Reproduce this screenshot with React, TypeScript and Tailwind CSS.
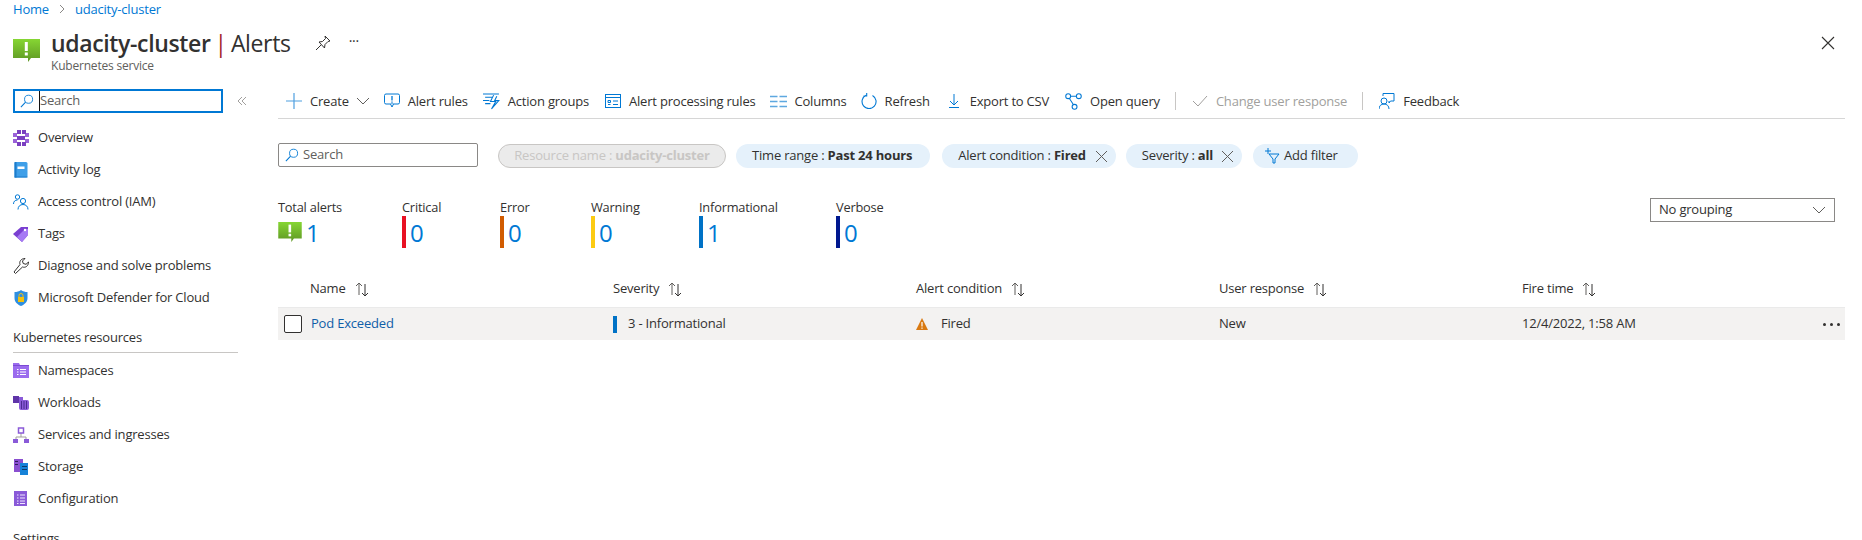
import React from "react";

const F = "[font-family:'Open_Sans',sans-serif]";
const B = "#0078d4";

function Svg({ s = 16, v = 16, c = "", children }: { s?: number; v?: number; c?: string; children: React.ReactNode }) {
  return (
    <svg width={s} height={s} viewBox={`0 0 ${v} ${v}`} fill="none" className={`shrink-0 ${c}`}>
      {children}
    </svg>
  );
}

function AlertLogo({ w = 27, h = 23 }: { w?: number; h?: number }) {
  return (
    <svg width={w} height={h} viewBox="0 0 27 23" className="shrink-0">
      <defs>
        <linearGradient id="lg" x1="0" y1="0" x2="0" y2="1">
          <stop offset="0" stopColor="#86d633" />
          <stop offset="1" stopColor="#5e9624" />
        </linearGradient>
      </defs>
      <path d="M0 0H27V19H18L15 23V19H0Z" fill="url(#lg)" />
      <rect x="11.8" y="3" width="3" height="9" fill="#fff" />
      <rect x="11.8" y="13.5" width="3" height="3" fill="#fff" />
    </svg>
  );
}

const Glass = ({ c = "" }: { c?: string }) => (
  <Svg s={14} c={c}>
    <circle cx="9.8" cy="6" r="4.6" stroke={B} strokeWidth="1" />
    <path d="M6.4 9.4L1 15" stroke={B} strokeWidth="1.2" />
  </Svg>
);

const Sort = () => (
  <Svg s={17} v={17}>
    <path d="M5 14V2M2 5l3-3 3 3" stroke="#605e5c" strokeWidth="1" />
    <path d="M11 3v12M8 12l3 3 3-3" stroke="#323130" strokeWidth="1" />
  </Svg>
);

const X = () => (
  <Svg s={13} v={13}>
    <path d="M1 1l11 11M12 1L1 12" stroke="#605e5c" strokeWidth="1" />
  </Svg>
);

const navIcons: Record<string, React.ReactNode> = {
  Overview: (
    <Svg s={16}>
      <g fill="#9a62d8">
        <rect x="0" y="3" width="4" height="4" />
        <rect x="0" y="9" width="4" height="4" />
        <rect x="12" y="3" width="4" height="4" />
        <rect x="12" y="9" width="4" height="4" />
      </g>
      <g fill="#7a3fc0">
        <rect x="4" y="0" width="4" height="4" />
        <rect x="9" y="0" width="4" height="4" />
        <rect x="4" y="6" width="8" height="4" />
        <rect x="4" y="12" width="4" height="4" />
        <rect x="9" y="12" width="4" height="4" />
      </g>
    </Svg>
  ),
  "Activity log": (
    <Svg s={16}>
      <rect x="1.5" y="0" width="13" height="15.500" rx="1.500" fill="#3f9fe8" />
      <rect x="1.5" y="0" width="2" height="15.500" fill="#1c7ccb" />
      <rect x="4.500" y="4.500" width="7" height="2.500" fill="#fff" />
      <rect x="1.500" y="14.500" width="13" height="1" fill="#1c7ccb" />
    </Svg>
  ),
  "Access control (IAM)": (
    <Svg s={16}>
      <circle cx="4.500" cy="3" r="2.200" stroke={B} />
      <path d="M.5 10c0-2.500 1.500-4 4-4" stroke={B} />
      <circle cx="10" cy="7" r="2.600" stroke={B} />
      <path d="M5 15.500c0-3 2-5 5-5s5 2 5 5" stroke={B} />
    </Svg>
  ),
  Tags: (
    <Svg s={16}>
      <path d="M0 8L8 1h7v8l-6 7z" fill="#7a3fd1" />
      <path d="M4 11l8-8h3v6l-6 7z" fill="#a67af4" />
      <circle cx="12" cy="4" r="1.200" fill="#fff" />
    </Svg>
  ),
  "Diagnose and solve problems": (
    <Svg s={16}>
      <path d="M1 14l1.500 1.500L9.500 9c3 1 6-1 6-5L13 6.300l-2.800-.8L9.500 3 12 .5C8 .5 6 3.500 7 6.500z" stroke="#323130" strokeWidth="1" fill="#fff" />
    </Svg>
  ),
  "Microsoft Defender for Cloud": (
    <Svg s={16}>
      <path d="M8 0c2 1.500 4 2 6.500 2v6c0 4-3 6.500-6.500 8C4.500 14.500 1.500 12 1.500 8V2C4 2 6 1.500 8 0z" fill="#2f8fe0" />
      <rect x="5" y="7" width="6" height="5" fill="#f4c20d" />
      <path d="M6 7V5.500a2 2 0 014 0V7" stroke="#f4c20d" />
    </Svg>
  ),
  Namespaces: (
    <Svg s={16}>
      <path d="M0 0h6l1 2h9v13H0z" fill="#9b6cee" />
      <rect x="0" y="2" width="16" height="1" fill="#7c4ad4" />
      <path d="M4 6.500h1.500M7 6.500h6M4 9h1.500M7 9h6M4 11.500h1.500M7 11.500h6" stroke="#fff" />
    </Svg>
  ),
  Workloads: (
    <Svg s={16}>
      <rect x="0" y="1" width="6" height="7" fill="#5f35a8" />
      <rect x="6" y="2" width="4" height="6" fill="#8a5ad8" />
      <rect x="6" y="5" width="10" height="10" rx="2" fill="#8a5ad8" />
      <path d="M8.500 6v8M11 6v8M13.500 6v8" stroke="#4b2a92" />
    </Svg>
  ),
  "Services and ingresses": (
    <Svg s={16}>
      <path d="M8 6v4M3 12v-2h10v2" stroke="#a19f9d" />
      <rect x="5.500" y="1" width="5" height="5" fill="#fff" stroke="#8a5ad8" strokeWidth="1.500" />
      <rect x="0" y="12" width="5" height="4" fill="#8a5ad8" />
      <rect x="11" y="12" width="5" height="4" fill="#8a5ad8" />
    </Svg>
  ),
  Storage: (
    <Svg s={16}>
      <rect x="1" y="0" width="9" height="13" fill="#8a4fd0" />
      <rect x="2" y="2" width="3" height="1" fill="#2d1a5c" />
      <rect x="2" y="5" width="3" height="1" fill="#2d1a5c" />
      <rect x="7" y="4" width="8" height="12" fill="#1682d8" />
      <rect x="9" y="7" width="5" height="1" fill="#0b3a68" />
      <rect x="9" y="10" width="5" height="1" fill="#0b3a68" />
    </Svg>
  ),
  Configuration: (
    <Svg s={16}>
      <rect x="1" y="0" width="13" height="15" fill="#8a5ad8" />
      <path d="M4 4h1.500M7 4h5M4 7h1.500M7 7h5M4 10h1.500M7 10h5M4 12.500h1.500M7 12.500h5" stroke="#efe6ff" />
    </Svg>
  ),
};

function NavRow({ label }: { label: string }) {
  return (
    <div className="flex h-8 items-center pl-[13px] text-[13px] text-[#323130]">
      <span className="flex w-[25px] shrink-0">{navIcons[label]}</span>
      <span>{label}</span>
    </div>
  );
}

function Tool({ icon, label, ml, dim, after, gap = "ml-[8px]" }: { icon: React.ReactNode; label: string; ml: string; dim?: boolean; after?: React.ReactNode; gap?: string }) {
  return (
    <div className={`flex items-center ${ml} ${dim ? "text-[#a19f9d]" : "text-[#323130]"}`}>
      {icon}
      <span className={gap}>{label}</span>
      {after}
    </div>
  );
}

const Sep = ({ ml }: { ml: string }) => <div className={`h-[18px] w-px bg-[#c8c6c4] ${ml}`} />;

function Stat({ label, value, color, w }: { label: string; value: string; color: string; w: string }) {
  return (
    <div className={`${w} shrink-0`}>
      <div className="text-[12.8px] leading-[17px] text-[#323130]">{label}</div>
      <div className="flex h-[32px] items-center">
        <span className={`h-[32px] w-[4px] ${color}`} />
        <span className="ml-[4px] mt-[1px] text-[24px] leading-none text-[#0078d4]">{value}</span>
      </div>
    </div>
  );
}

function Pill({ label, bold, x, c, gap = "gap-[9px]", pr = "pr-[18px]" }: { label: string; bold: string; x?: boolean; c: string; gap?: string; pr?: string }) {
  return (
    <div className={`flex h-[24px] items-center rounded-full bg-[#e5f1fb] pl-[16px] text-[13px] text-[#323130] ${gap} ${x ? "pr-[8px]" : pr} ${c}`}>
      <span>
        {label} : <b className="font-bold">{bold}</b>
      </span>
      {x && <X />}
    </div>
  );
}

function Head({ children }: { children: string }) {
  return (
    <div className="flex items-center gap-[8px] text-[13px] font-medium text-[#323130]">
      <span>{children}</span>
      <Sort />
    </div>
  );
}

export default function App() {
  return (
    <div className={`h-[540px] w-[1862px] overflow-hidden bg-white ${F} tracking-[-0.2px]`}>
      <div className="flex h-[18px] items-center pl-[13px] text-[13px] leading-[16px] text-[#0078d4]">
        <span>Home</span>
        <Svg s={10} v={10} c="mx-[8px]">
          <path d="M3 1l4 4-4 4" stroke="#8a8886" />
        </Svg>
        <span>udacity-cluster</span>
      </div>

      <div className="flex h-[71px] items-start pl-[13px] pt-[9px]">
        <div className="mt-[12px] w-[38px] shrink-0">
          <AlertLogo />
        </div>
        <div>
          <div className="flex items-center text-[23px] leading-[32px] tracking-[-0.35px] text-[#323130]">
            <span className="font-semibold">udacity-cluster</span>
            <span className="mx-[4px] text-[#a4262c]">|</span>
            <span>Alerts</span>
          </div>
          <div className="-mt-[1px] text-[12px] leading-[16px] text-[#605e5c]">Kubernetes service</div>
        </div>
        <Svg s={16} c="ml-[24px] mt-[8px]">
          <path d="M10 1l5 5-2 .5-3 3-.5 3.500L4 7l3.500-.5 3-3zM6 10l-5 5" stroke="#323130" />
        </Svg>
        <span className="ml-[18px] mt-[6px] text-[14px] leading-[16px] text-[#323130]">···</span>
        <Svg s={14} v={14} c="ml-auto mr-[27px] mt-[9px]">
          <path d="M1 1l12 12M13 1L1 13" stroke="#323130" strokeWidth="1.100" />
        </Svg>
      </div>

      <div className="flex">
        <aside className="w-[278px] shrink-0">
          <div className="flex items-center">
            <div className="ml-[13px] flex h-[24px] w-[210px] items-center border-2 border-[#0078d4] pl-[5px] text-[13px] text-[#605e5c]">
              <Glass />
              <span className="ml-[5px] border-l border-[#111]">Search</span>
            </div>
            <Svg s={12} v={12} c="ml-[13px]">
              <path d="M6 2L2 6l4 4M10 2L6 6l4 4" stroke="#a19f9d" />
            </Svg>
          </div>
          <div className="mt-[9px]">
            {["Overview", "Activity log", "Access control (IAM)", "Tags", "Diagnose and solve problems", "Microsoft Defender for Cloud"].map((l) => (
              <NavRow key={l} label={l} />
            ))}
          </div>
          <div className="ml-[13px] mr-[40px] mt-[14px] border-b border-[#c8c6c4] pb-[6px] text-[13px] font-medium leading-[18px] text-[#323130]">
            Kubernetes resources
          </div>
          <div className="mt-[2px]">
            {["Namespaces", "Workloads", "Services and ingresses", "Storage", "Configuration"].map((l) => (
              <NavRow key={l} label={l} />
            ))}
          </div>
          <div className="mt-[14px] pl-[13px] text-[13px] font-medium leading-[18px] text-[#323130]">Settings</div>
        </aside>

        <main className="min-w-0 flex-1 pr-[17px]">
          <div className="flex h-[30px] items-start border-b border-[#d6d6d6] pl-[8px] text-[13px] leading-[24px]">
            <Tool
              ml=""
              label="Create"
              icon={
                <Svg s={16}>
                  <path d="M8 0v16M0 8h16" stroke="#4f9fe0" strokeWidth="1.200" />
                </Svg>
              }
              after={
                <Svg s={14} v={14} c="ml-[7px]">
                  <path d="M1 4l6 6 6-6" stroke="#605e5c" />
                </Svg>
              }
            />
            <Tool
              ml="ml-[14px]"
              label="Alert rules"
              icon={
                <Svg s={16}>
                  <rect x=".5" y="1" width="15" height="10" rx="1.500" fill="#fff" stroke={B} />
                  <path d="M6.500 11l1.500 3 1.500-3" fill="#fff" stroke={B} />
                  <path d="M8 3v4.500M8 8.500v1.200" stroke={B} strokeWidth="1.300" />
                </Svg>
              }
            />
            <Tool
              ml="ml-[15px]"
              label="Action groups"
              icon={
                <Svg s={17} v={16}>
                  <path d="M0 1h15M2 4h7M0 7h6M2 10h5M10 2l-3 6h5l-4 7 7-8h-4l2-4" stroke={B} />
                </Svg>
              }
            />
            <Tool
              ml="ml-[16px]"
              label="Alert processing rules"
              icon={
                <Svg s={16}>
                  <rect x=".5" y="1.500" width="15" height="13" stroke={B} />
                  <path d="M.5 4.500h15M3 7.500h2.500v2H3zM3 11.500h2.500M8 8h5M8 11.500h5" stroke={B} />
                </Svg>
              }
            />
            <Tool
              ml="ml-[14px]"
              label="Columns"
              icon={
                <Svg s={17} v={17}>
                  <path d="M0 3.500h7.500M9.500 3.500H17M0 8.500h7.500M9.500 8.500H17M0 13.500h7.500M9.500 13.500H17" stroke="#5ea8e0" strokeWidth="1.600" />
                </Svg>
              }
            />
            <Tool
              ml="ml-[14px]"
              label="Refresh"
              icon={
                <Svg s={16}>
                  <path d="M5 2.300a7 7 0 106.500.2M5.700 0v3H2.500" stroke={B} strokeWidth="1.100" />
                </Svg>
              }
            />
            <Tool
              ml="ml-[17px]"
              gap="ml-[9px]"
              label="Export to CSV"
              icon={
                <Svg s={14} v={14}>
                  <path d="M7 0v11M3 7l4 4 4-4M2 13.500h10" stroke={B} />
                </Svg>
              }
            />
            <Tool
              ml="ml-[16px]"
              label="Open query"
              icon={
                <Svg s={17} v={16}>
                  <circle cx="3" cy="3" r="2.300" stroke={B} />
                  <circle cx="13" cy="3" r="2.300" stroke={B} />
                  <circle cx="9" cy="13" r="2.300" stroke={B} />
                  <path d="M5.300 3h5.400M4 5l4 6" stroke={B} />
                </Svg>
              }
            />
            <Sep ml="ml-[15px] mt-[3px]" />
            <Tool
              dim
              ml="ml-[16px]"
              label="Change user response"
              icon={
                <Svg s={16}>
                  <path d="M1 8l5 5 9-10" stroke="#a19f9d" />
                </Svg>
              }
            />
            <Sep ml="ml-[15px] mt-[3px]" />
            <Tool
              ml="ml-[16px]"
              label="Feedback"
              icon={
                <Svg s={16}>
                  <circle cx="5" cy="8" r="3" stroke={B} />
                  <path d="M0 16c0-3 2-5 5-5s5 2 5 5M4 3V.5h11V8h-3.500L10 10V8" stroke={B} />
                </Svg>
              }
            />
          </div>

          <div className="mt-[24px] flex items-start">
            <div className="flex h-[24px] w-[200px] items-center rounded-[2px] border border-[#8a8886] pl-[6px] text-[13px] text-[#605e5c]">
              <Glass />
              <span className="ml-[4px]">Search</span>
            </div>
            <div className="ml-[20px] mt-[1px] flex h-[24px] w-[228px] items-center justify-center rounded-full border border-[#c8c6c4] bg-[#ebebeb] text-[13px] text-[#c8c6c4]">
              <span>
                Resource name : <b className="font-bold">udacity-cluster</b>
              </span>
            </div>
            <div className="ml-[10px] mt-[1px] flex">
              <Pill label="Time range" bold="Past 24 hours" c="" />
              <Pill label="Alert condition" bold="Fired" x c="ml-[12px]" />
              <Pill label="Severity" bold="all" x c="ml-[10px]" gap="gap-[8px]" />
              <div className="ml-[11px] flex h-[24px] items-center rounded-full bg-[#e5f1fb] pl-[11px] pr-[20px] text-[13px] text-[#323130]">
                <Svg s={16}>
                  <path d="M4 0v6M1 3h6" stroke="#0078d4" />
                  <path d="M5 6h10l-4 5v4H9v-4z" stroke="#0078d4" />
                </Svg>
                <span className="ml-[4px]">Add filter</span>
              </div>
            </div>
          </div>

          <div className="mt-[31px] flex items-start">
            <div className="w-[124px] shrink-0">
              <div className="text-[12.8px] leading-[17px] text-[#323130]">Total alerts</div>
              <div className="flex h-[32px] items-center">
                <AlertLogo w={24} h={20} />
                <span className="ml-[4px] mt-[1px] text-[24px] leading-none text-[#0078d4]">1</span>
              </div>
            </div>
            <Stat label="Critical" value="0" color="bg-[#e81123]" w="w-[98px]" />
            <Stat label="Error" value="0" color="bg-[#d15b00]" w="w-[91px]" />
            <Stat label="Warning" value="0" color="bg-[#fccb12]" w="w-[108px]" />
            <Stat label="Informational" value="1" color="bg-[#0072c6]" w="w-[137px]" />
            <Stat label="Verbose" value="0" color="bg-[#00188f]" w="w-[100px]" />
            <div className="ml-auto mr-[10px] -mt-[1px] flex h-[24px] w-[185px] items-center justify-between border border-[#8a8886] px-[8px] text-[13px] text-[#323130]">
              <span>No grouping</span>
              <Svg s={14} v={14}>
                <path d="M1 4l6 6 6-6" stroke="#605e5c" />
              </Svg>
            </div>
          </div>

          <div className="mt-[27px] grid h-[28px] grid-cols-[335px_303px_303px_303px_1fr] items-center pl-[32px] [&>*:nth-child(n+2)]:-ml-[32px]">
            <Head>Name</Head>
            <Head>Severity</Head>
            <Head>Alert condition</Head>
            <Head>User response</Head>
            <Head>Fire time</Head>
          </div>
          <div className="mt-[4px] grid h-[33px] grid-cols-[335px_303px_303px_303px_1fr] items-center border-t border-[#eaeaea] bg-[#f3f2f1] text-[13px] text-[#323130]">
            <div className="flex items-center pl-[6px]">
              <span className="h-[18px] w-[18px] rounded-[2px] border border-[#323130] bg-white" />
              <span className="ml-[9px] text-[#0f5ea8]">Pod Exceeded</span>
            </div>
            <div className="flex items-center">
              <span className="h-[17px] w-[4px] bg-[#0072c6]" />
              <span className="ml-[11px]">3 - Informational</span>
            </div>
            <div className="flex items-center">
              <Svg s={12} v={12}>
                <path d="M6 0l6 12H0z" fill="#d97a12" />
                <rect x="5.400" y="4" width="1.200" height="4.500" fill="#fff" />
                <rect x="5.400" y="9.500" width="1.200" height="1.300" fill="#fff" />
              </Svg>
              <span className="ml-[13px]">Fired</span>
            </div>
            <div>New</div>
            <div className="flex items-center justify-between pr-[5px]">
              <span>12/4/2022, 1:58 AM</span>
              <span className="flex gap-[4px]">
                <i className="h-[3px] w-[3px] rounded-full bg-[#323130]" />
                <i className="h-[3px] w-[3px] rounded-full bg-[#323130]" />
                <i className="h-[3px] w-[3px] rounded-full bg-[#323130]" />
              </span>
            </div>
          </div>
        </main>
      </div>
    </div>
  );
}
